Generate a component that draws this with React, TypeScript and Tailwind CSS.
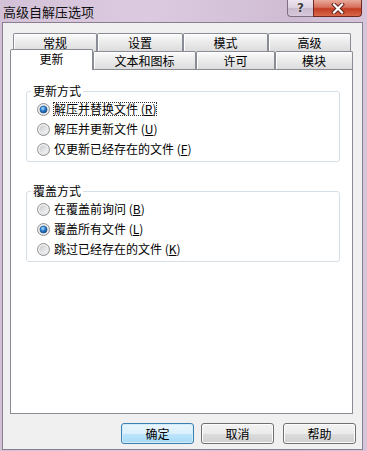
import React from "react";

const FONT = "font-['Noto_Sans_CJK_SC','Noto_Sans',sans-serif]";

function Radio({ checked, id }: { checked?: boolean; id: string }) {
  return (
    <svg width="13" height="13" viewBox="0 0 13 13" className="shrink-0">
      <defs>
        <linearGradient id={`o${id}`} x1="0" y1="0" x2="1" y2="1">
          <stop offset="0" stopColor="#f6f6f6" />
          <stop offset="1" stopColor="#e2e2e2" />
        </linearGradient>
        <linearGradient id={`i${id}`} x1="0" y1="0" x2="1" y2="1">
          <stop offset="0" stopColor="#c9cbcf" />
          <stop offset="1" stopColor="#f7f7f7" />
        </linearGradient>
        <radialGradient id={`d${id}`} cx="0.4" cy="0.35" r="0.7">
          <stop offset="0" stopColor="#b9e2ff" />
          <stop offset="0.45" stopColor="#2f86d6" />
          <stop offset="1" stopColor="#0c3f7c" />
        </radialGradient>
      </defs>
      <circle cx="6.5" cy="6.5" r="6" fill={`url(#o${id})`} stroke="#8e8f8f" strokeWidth="1" />
      <circle cx="6.5" cy="6.5" r="4.2" fill={`url(#i${id})`} />
      {checked && <circle cx="6.5" cy="6.5" r="3.6" fill={`url(#d${id})`} stroke="#1b4f8a" strokeWidth="0.5" />}
    </svg>
  );
}

function RadioRow({
  label,
  mn,
  checked,
  focus,
  id,
}: {
  label: string;
  mn: string;
  checked?: boolean;
  focus?: boolean;
  id: string;
}) {
  return (
    <div className="h-[20px] flex items-center pl-[10px]">
      <Radio checked={checked} id={id} />
      <span
        className={`ml-[3px] border ${
          focus ? "border-dotted border-[#333]" : "border-transparent"
        } text-[12px] leading-[12px] text-black whitespace-nowrap`}
      >
        {label} (<span className="underline">{mn}</span>)
      </span>
    </div>
  );
}

function Group({ title, children }: { title: string; children: React.ReactNode }) {
  return (
    <fieldset className="w-[314px] border border-[#d5dfe5] rounded-[3px] pt-[1px] pb-[2px]">
      <legend className="ml-[4px] px-[2px] text-[12px] leading-[14px] text-black bg-white">{title}</legend>
      {children}
    </fieldset>
  );
}

function BackTab({ w, label }: { w: string; label: string }) {
  return (
    <div
      className={`${w} h-full border border-b-0 border-[#898c95] rounded-t-[2px] bg-[linear-gradient(to_bottom,#fbfbfb_0%,#ececec_45%,#dcdcdc_100%)] shadow-[inset_1px_1px_0_#ffffff] flex items-center justify-center text-[12px] leading-[12px] text-black`}
    >
      {label}
    </div>
  );
}

function Btn({ label, def }: { label: string; def?: boolean }) {
  return (
    <div
      className={`w-[73px] h-[21px] rounded-[3px] border flex items-center justify-center text-[12px] leading-[12px] text-black ${
        def
          ? "border-[#3c7fb1] bg-[linear-gradient(to_bottom,#eaf6fd_0%,#d9f0fc_50%,#bee6fd_50%,#a7d9f5_100%)] shadow-[inset_0_0_0_1px_#d2ecfb]"
          : "border-[#707070] bg-[linear-gradient(to_bottom,#f2f2f2_0%,#ebebeb_50%,#dddddd_50%,#cfcfcf_100%)] shadow-[inset_0_0_0_1px_#fcfcfc]"
      }`}
    >
      {label}
    </div>
  );
}

export default function App() {
  return (
    <div
      className={`w-[367px] h-[451px] bg-[linear-gradient(to_right,#d3c1d7,#dccbe0_40%,#cfbcd3_80%,#d6c5da)] flex flex-col overflow-hidden ${FONT}`}
    >
      {/* title bar */}
      <div className="h-[22px] shrink-0 flex items-start justify-between">
        <div className="pl-[3px] pt-[4px] text-[13px] leading-[16px] text-[#111]">高级自解压选项</div>
        <div className="flex mr-[5px]">
          <div className="w-[26px] h-[17px] rounded-bl-[4px] border border-t-0 border-r-0 border-[#7d6f82] bg-[linear-gradient(to_bottom,#eee4f0_0%,#dccfe0_50%,#c9b8ce_50%,#d8c9dc_100%)] flex items-center justify-center">
            <span className="text-[12px] leading-[12px] font-bold text-[#3a3a3a] font-['DejaVu_Sans',sans-serif] [text-shadow:0_0_2px_#ffffff]">?</span>
          </div>
          <div className="w-[49px] h-[17px] rounded-br-[4px] border border-t-0 border-[#6e2a22] bg-[linear-gradient(to_bottom,#e9a99a_0%,#d7705c_45%,#c23d22_55%,#d9684a_100%)] flex items-center justify-center">
            <svg width="14" height="11" viewBox="0 0 14 11">
              <path d="M3 1.5 L11 9.5 M11 1.5 L3 9.5" stroke="#5a2019" strokeWidth="4" strokeLinecap="square" />
              <path d="M3 1.5 L11 9.5 M11 1.5 L3 9.5" stroke="#ffffff" strokeWidth="2.2" strokeLinecap="square" />
            </svg>
          </div>
        </div>
      </div>

      {/* client area */}
      <div className="flex-1 ml-[2px] mr-[4px] mb-[1px] border border-[#8a7f90] bg-[#f0f0f0] flex flex-col pl-[7px] pt-[10px]">
        <div className="w-[343px] flex flex-col">
          <div className="h-[18px] flex pl-[3px]">
            <BackTab w="w-[84px]" label="常规" />
            <BackTab w="w-[86px]" label="设置" />
            <BackTab w="w-[85px]" label="模式" />
            <BackTab w="w-[83px]" label="高级" />
          </div>
          <div className="h-[18px] flex items-end">
            <div className="relative z-10 w-[83px] h-[21px] -mb-px border border-b-0 border-[#898c95] rounded-t-[2px] bg-white flex items-center justify-center text-[12px] leading-[12px] text-black pb-[3px]">
              更新
            </div>
            <BackTab w="w-[103px]" label="文本和图标" />
            <BackTab w="w-[79px]" label="许可" />
            <BackTab w="w-[78px]" label="模块" />
          </div>
          <div className="h-[345px] border border-[#898c95] bg-white pl-[15px] pt-[14px]">
            <Group title="更新方式">
              <RadioRow id="a" label="解压并替换文件" mn="R" checked focus />
              <RadioRow id="b" label="解压并更新文件" mn="U" />
              <RadioRow id="c" label="仅更新已经存在的文件" mn="F" />
            </Group>
            <div className="h-[22px]" />
            <Group title="覆盖方式">
              <RadioRow id="d" label="在覆盖前询问" mn="B" />
              <RadioRow id="e" label="覆盖所有文件" mn="L" checked />
              <RadioRow id="f" label="跳过已经存在的文件" mn="K" />
            </Group>
          </div>
        </div>
        <div className="mt-[9px] flex justify-end pr-[6px]">
          <Btn label="确定" def />
          <div className="w-[7px]" />
          <Btn label="取消" />
          <div className="w-[9px]" />
          <Btn label="帮助" />
        </div>
      </div>
    </div>
  );
}
